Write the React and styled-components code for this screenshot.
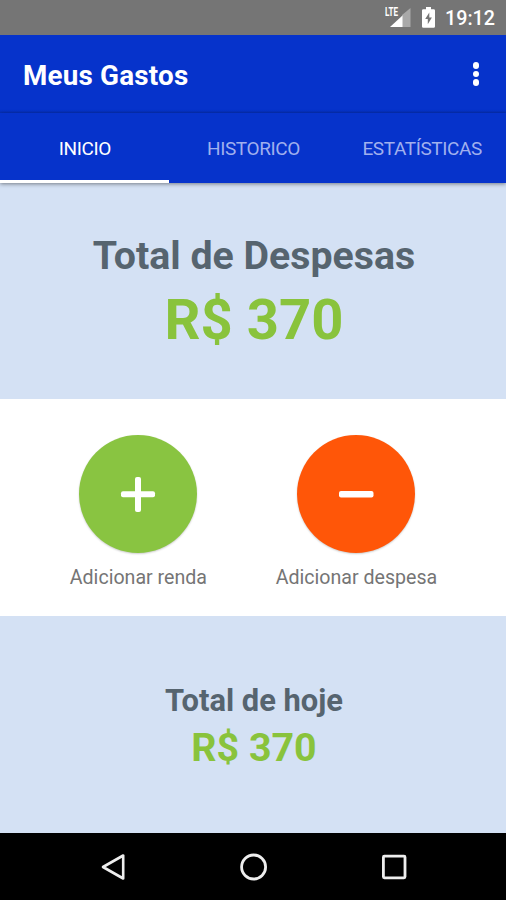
import React, { useState } from 'react';
import styled, { createGlobalStyle } from 'styled-components';

const GlobalStyle = createGlobalStyle`
    * {
        box-sizing: border-box;
    }
    body {
        margin: 0;
        font-family: Roboto, 'Noto Sans', sans-serif;
    }
    button {
        border: 0;
        padding: 0;
        background: none;
        font-family: inherit;
    }
`;

const ScreenStyled = styled.div`
    display: flex;
    flex-direction: column;
    width: 506px;
    height: 900px;
    overflow: hidden;
    background: #ffffff;
`;

const StatusBarStyled = styled.div`
    display: flex;
    justify-content: flex-end;
    height: 35px;
    padding-right: 11px;
    background: #757575;
    color: #ffffff;

    .status__icons {
        display: block;
        width: 60px;
        height: 35px;
    }
    .status__clock {
        font-size: 19.7px;
        font-weight: 500;
        line-height: 37px;
    }
`;

const ToolbarStyled = styled.header`
    display: flex;
    justify-content: space-between;
    height: 78px;
    padding: 0 27px 0 23px;
    align-items: center;
    background: linear-gradient(#0633cb 75px, #052fb6 78px);

    h1 {
        margin: 4px 0 0;
        color: #ffffff;
        font-size: 27.8px;
        font-weight: bold;
        letter-spacing: 0.2px;
        line-height: 34px;
        white-space: nowrap;
    }
`;

const MenuButton = styled.button`
    display: flex;
    flex-direction: column;
    gap: 2.2px;

    span {
        width: 6.4px;
        height: 6.4px;
        border-radius: 50%;
        background: #ffffff;
    }
`;

const TabsStyled = styled.nav`
    display: grid;
    grid-template-columns: repeat(3, 1fr);
    height: 70px;
    flex-shrink: 0;
    position: relative;
    background: #0633cb;
    box-shadow: 0 1px 4px rgba(0, 0, 0, 0.45);
`;

const TabButton = styled.button`
    padding: 4px 0 0 1px;
    color: ${(props) => (props.$active ? '#ffffff' : '#a0b0ee')};
    border-bottom: 3px solid ${(props) => (props.$active ? '#ffffff' : 'transparent')};
    font-size: 19px;
    letter-spacing: -0.4px;
    white-space: nowrap;
`;

const PanelStyled = styled.section`
    display: flex;
    flex-direction: column;
    align-items: center;
    height: ${(props) => props.$height};
    padding-top: ${(props) => props.$top};
    padding-left: 2px;
    background: #d4e1f4;
`;

const PanelTitle = styled.h2`
    margin: 0;
    color: #56646f;
    font-size: ${(props) => props.$size};
    font-weight: bold;
    line-height: ${(props) => props.$line};
    white-space: nowrap;
`;

const Amount = styled.p`
    margin: ${(props) => props.$gap} 0 0;
    color: #89c33c;
    font-size: ${(props) => props.$size};
    font-weight: bold;
    line-height: ${(props) => props.$line};
    white-space: nowrap;
`;

const ActionsStyled = styled.section`
    display: flex;
    justify-content: space-evenly;
    height: 217px;
    padding: 36px 0 0 1px;
    background: #ffffff;
`;

const ActionStyled = styled.div`
    display: flex;
    flex-direction: column;
    align-items: center;

    .action__label {
        margin-top: 13px;
        color: #757575;
        font-size: 19.6px;
        line-height: 24px;
        white-space: nowrap;
    }
`;

const RoundButton = styled.button`
    display: flex;
    align-items: center;
    justify-content: center;
    width: 118px;
    height: 118px;
    border-radius: 50%;
    background: ${(props) => props.$color};
    box-shadow: 0 1px 2px rgba(0, 0, 0, 0.2);
`;

const NavBarStyled = styled.footer`
    display: grid;
    grid-template-columns: repeat(3, 140.6px);
    justify-content: center;
    justify-items: center;
    align-items: center;
    height: 67px;
    background: #000000;

    svg {
        display: block;
    }
`;

const tabs = [
    { id: 'inicio', label: 'INICIO' },
    { id: 'historico', label: 'HISTORICO' },
    { id: 'estatisticas', label: 'ESTATÍSTICAS' },
];

function StatusBar() {
    return (
        <StatusBarStyled>
            <svg className="status__icons" viewBox="0 0 60 35">
                <path d="M17 15 L25.5 8 V27 H17 Z" fill="#a9a9a9" />
                <path d="M5 27 L17.5 15.5 V27 Z" fill="#fff" />
                <text x="0" y="16" fontSize="12" fontWeight="bold" fill="#fff" stroke="#757575" strokeWidth="1" paintOrder="stroke" textLength="13" lengthAdjust="spacingAndGlyphs">LTE</text>
                <path d="M41 9.2 V7 H46 V9.2 H48.6 Q50 9.2 50 10.6 V26.4 Q50 27.8 48.6 27.8 H38.4 Q37 27.8 37 26.4 V10.6 Q37 9.2 38.4 9.2 Z" fill="#fff" />
                <path d="M44.3 12.5 L40.2 19 H42.8 V24.3 L46.9 17.5 H44.3 Z" fill="#757575" />
            </svg>
            <span className="status__clock">19:12</span>
        </StatusBarStyled>
    );
}

function Action(props) {
    const { label, color, children } = props;

    return (
        <ActionStyled>
            <RoundButton $color={color} aria-label={label}>
                <svg width="36" height="36" viewBox="0 0 36 36" fill="#fff">
                    {children}
                </svg>
            </RoundButton>
            <span className="action__label">{label}</span>
        </ActionStyled>
    );
}

function App() {
    const [activeTab, setActiveTab] = useState('inicio');

    return (
        <ScreenStyled>
            <GlobalStyle />
            <StatusBar />
            <ToolbarStyled>
                <h1>Meus Gastos</h1>
                <MenuButton aria-label="Menu">
                    <span />
                    <span />
                    <span />
                </MenuButton>
            </ToolbarStyled>
            <TabsStyled>
                {
                    tabs.map((tab) =>
                        <TabButton key={tab.id} $active={tab.id === activeTab} onClick={() => setActiveTab(tab.id)}>
                            {tab.label}
                        </TabButton>
                    )
                }
            </TabsStyled>

            <PanelStyled $height="216px" $top="50px">
                <PanelTitle $size="39.3px" $line="46px">Total de Despesas</PanelTitle>
                <Amount $size="56.2px" $line="66px" $gap="8px">R$ 370</Amount>
            </PanelStyled>

            <ActionsStyled>
                <Action label="Adicionar renda" color="#89c441">
                    <rect x="1" y="15.2" width="34" height="6" rx="2" />
                    <rect x="15" y="1" width="6" height="35" rx="2" />
                </Action>
                <Action label="Adicionar despesa" color="#ff5608">
                    <rect x="1" y="15" width="34.5" height="6.6" rx="2" />
                </Action>
            </ActionsStyled>

            <PanelStyled $height="217px" $top="67px">
                <PanelTitle $size="30.9px" $line="36px">Total de hoje</PanelTitle>
                <Amount $size="39.4px" $line="46px" $gap="6px">R$ 370</Amount>
            </PanelStyled>

            <NavBarStyled>
                <svg width="28" height="28" viewBox="0 0 28 28" fill="none" stroke="#eee" strokeWidth="2.6">
                    <path d="M25.2 2.5 V25.5 L5 14 Z" strokeLinejoin="round" />
                </svg>
                <svg width="28" height="28" viewBox="0 0 28 28" fill="none" stroke="#eee" strokeWidth="2.8">
                    <circle cx="14.6" cy="14" r="12" />
                </svg>
                <svg width="28" height="28" viewBox="0 0 28 28" fill="none" stroke="#eee" strokeWidth="2.8">
                    <rect x="3.4" y="3.2" width="21.6" height="21.6" rx="1" />
                </svg>
            </NavBarStyled>
        </ScreenStyled>
    );
}

export default App;
